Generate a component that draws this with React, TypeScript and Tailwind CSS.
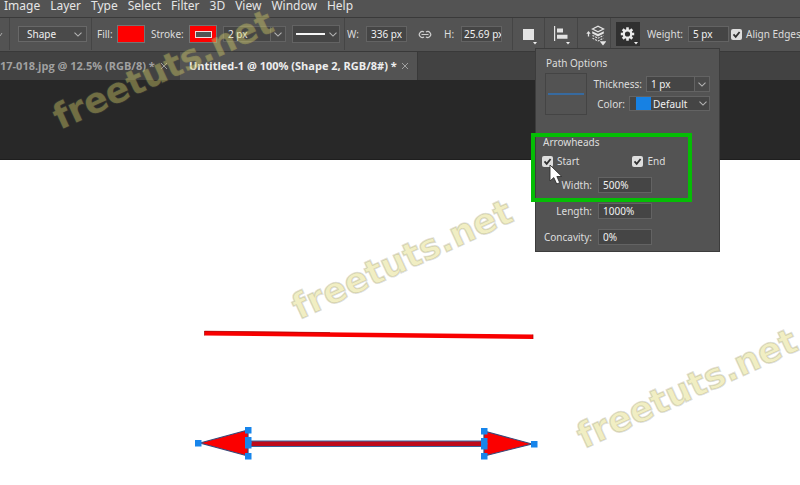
import type { ReactNode } from "react";

const menus = ["Image", "Layer", "Type", "Select", "Filter", "3D", "View", "Window", "Help"];

const fieldClass =
  "h-4 border border-[#636363] bg-[#454545] px-1 leading-3 text-[#f2f2f2] outline-none";

function Chevron() {
  return (
    <svg width="8" height="5" viewBox="0 0 8 5" fill="none" stroke="#b4b4b4" className="shrink-0" aria-hidden="true">
      <path d="M0.5 0.7 L4 4.1 L7.5 0.7" strokeWidth="1.1" />
    </svg>
  );
}

function Divider({ className }: { className: string }) {
  return <div className={`h-8 w-px shrink-0 bg-[#454545] ${className}`} />;
}

function Corner() {
  return <path d="M0 0 H4 L2 2.5 Z" fill="#f0f0f0" />;
}

function CheckBox({ id, label }: { id: string; label: string }) {
  return (
    <div className="flex items-center gap-1">
      <span className="grid h-[11px] w-[11px] shrink-0">
        <input
          id={id}
          type="checkbox"
          defaultChecked
          className="col-start-1 row-start-1 h-[11px] w-[11px] appearance-none rounded-[2px] bg-[#dedede]"
        />
        <svg viewBox="0 0 11 11" className="pointer-events-none col-start-1 row-start-1" aria-hidden="true">
          <path d="M2.5 5.4 L4.7 7.8 L8.6 3" fill="none" stroke="#303030" strokeWidth="1.8" />
        </svg>
      </span>
      <label htmlFor={id} className="whitespace-nowrap">{label}</label>
    </div>
  );
}

function Tool({ label, className, children }: { label: string; className: string; children: ReactNode }) {
  return (
    <button type="button" aria-label={label} className={`flex h-6 shrink-0 items-center justify-center ${className}`}>
      {children}
    </button>
  );
}

function GearIcon() {
  const teeth = [0, 45, 90, 135, 180, 225, 270, 315];
  return (
    <svg width="24" height="24" viewBox="0 0 24 24" aria-hidden="true">
      <g transform="translate(11.5 12)">
        <circle r="3.7" fill="none" stroke="#ececec" strokeWidth="2.2" />
        {teeth.map((angle) => (
          <rect key={angle} x="-1.3" y="-6.7" width="2.6" height="2.8" fill="#ececec" transform={`rotate(${angle})`} />
        ))}
      </g>
      <g transform="translate(18 20)"><Corner /></g>
    </svg>
  );
}

function OptionsBar() {
  return (
    <div className="flex h-[34px] items-center overflow-hidden border-t border-[#3a3a3a] bg-[#535353] pb-px text-[10px] leading-3 text-[#dddddd]">
      <div className="w-[9px] shrink-0 overflow-hidden"><svg width="3" height="5" aria-hidden="true"><path d="M0 4 L2 1" stroke="#aaa" /></svg></div>
      <Divider className="mr-2" />
      <div className="flex h-4 w-[69px] shrink-0 items-center border border-[#686868] bg-[#4a4a4a] pr-1">
        <select aria-label="Tool mode" className="min-w-0 flex-1 appearance-none bg-transparent pl-2 text-[#f0f0f0] outline-none">
          <option>Shape</option>
        </select>
        <Chevron />
      </div>
      <Divider className="ml-1 mr-[5px]" />
      <label htmlFor="fill" className="w-5 shrink-0">Fill:</label>
      <button id="fill" type="button" aria-label="Fill color" className="h-[18px] w-7 shrink-0 border border-[#747474] bg-[#fe0000]" />
      <label htmlFor="stroke" className="ml-1.5 w-[38px] shrink-0">Stroke:</label>
      <button id="stroke" type="button" aria-label="Stroke color" className="flex h-[18px] w-7 shrink-0 items-center justify-center border border-[#747474] bg-[#fe0000]">
        <span className="h-[7px] w-[17px] border border-[#f4dede] bg-[#535353]" />
      </button>
      <input aria-label="Stroke width" defaultValue="2 px" className={`${fieldClass} ml-1.5 w-12 shrink-0`} />
      <button type="button" aria-label="Stroke width presets" className="flex h-4 w-[15px] shrink-0 items-center justify-center border border-l-0 border-[#636363] bg-[#4a4a4a]"><Chevron /></button>
      <button type="button" aria-label="Stroke type" className="ml-1.5 flex h-[18px] w-12 shrink-0 items-center justify-center gap-1 border border-[#636363] bg-[#454545]">
        <span className="h-0.5 w-[29px] bg-[#f5f5f5]" />
        <Chevron />
      </button>
      <Divider className="ml-1 mr-0.5" />
      <label htmlFor="shape-w" className="w-[19px] shrink-0">W:</label>
      <input id="shape-w" defaultValue="336 px" className={`${fieldClass} w-[41px] shrink-0`} />
      <Tool label="Link width and height" className="ml-2.5 w-4">
        <svg width="16" height="9" viewBox="0 0 16 9" fill="none" stroke="#cfcfcf" strokeWidth="1.2" aria-hidden="true">
          <path d="M7 2 A3 3 0 1 0 7 7 M9 2 A3 3 0 1 1 9 7 M4.5 4.5 H11.5" />
        </svg>
      </Tool>
      <label htmlFor="shape-h" className="ml-[11px] w-[17px] shrink-0">H:</label>
      <input id="shape-h" defaultValue="25.69 px" className="h-4 w-[41px] shrink-0 border border-[#636363] bg-[#454545] pl-0.5 leading-3 text-[#f2f2f2] outline-none" />
      <Divider className="ml-2.5 mr-1.5" />
      <Tool label="Path operations" className="w-[18px]">
        <svg width="18" height="24" viewBox="0 0 18 24" aria-hidden="true">
          <rect x="4" y="7" width="11" height="11" fill="#e3e3e3" />
          <g transform="translate(14 20)"><Corner /></g>
        </svg>
      </Tool>
      <Divider className="mx-[7px]" />
      <Tool label="Path alignment" className="w-5">
        <svg width="20" height="24" viewBox="0 0 20 24" fill="#e3e3e3" aria-hidden="true">
          <path d="M2 4 H3.2 V19 H2 Z M5 6.5 H11 V10.5 H5 Z M5 12.8 H15.5 V16.8 H5 Z" />
          <g transform="translate(14 20)"><Corner /></g>
        </svg>
      </Tool>
      <Divider className="ml-[5px] mr-1.5" />
      <Tool label="Path arrangement" className="w-[22px]">
        <svg width="22" height="24" viewBox="0 0 22 24" fill="none" stroke="#e3e3e3" strokeWidth="1.3" aria-hidden="true">
          <path d="M4.5 14.5 V10.5" />
          <path d="M2.3 11.8 L4.5 9 L6.7 11.8 Z" fill="#e3e3e3" stroke="none" />
          <path d="M8.5 7 L14 4.2 L19.5 7 L14 9.8 Z" />
          <path d="M8.2 9.2 L14 12 L19.8 9.2 V11.4 L14 14.4 L8.2 11.4 Z" fill="#e3e3e3" stroke="none" />
          <path d="M8.5 13.4 L14 16.2 L19.5 13.4 M8.5 16.2 L14 19 L19.5 16.2" strokeDasharray="2 1" strokeWidth="1.1" />
          <g transform="translate(17 20)"><Corner /></g>
        </svg>
      </Tool>
      <Divider className="ml-1 mr-[5px]" />
      <Tool label="Path options" className="w-6 bg-[#303030]"><GearIcon /></Tool>
      <label htmlFor="weight" className="ml-[7px] w-[41px] shrink-0">Weight:</label>
      <input id="weight" defaultValue="5 px" className={`${fieldClass} mr-0.5 w-[41px] shrink-0`} />
      <CheckBox id="align-edges" label="Align Edges" />
    </div>
  );
}

function Percent({ id, label, value }: { id: string; label: string; value: string }) {
  return (
    <div className="flex items-center">
      <label htmlFor={id} className="w-14 text-right">{label}</label>
      <input id={id} defaultValue={value} className={`${fieldClass} ml-1.5 w-[54px]`} />
    </div>
  );
}

function PathOptions() {
  return (
    <section className="absolute left-[535px] top-12 w-[185px] border border-[#3c3c3c] bg-[#535353] pb-1.5 text-[10px] leading-3 text-[#dddddd]">
      <h2 className="ml-2.5 mt-2">Path Options</h2>
      <div className="ml-[9px] mt-1 flex">
        <div className="flex h-[42px] w-[42px] items-center border border-[#444444] px-0.5">
          <div className="h-0.5 w-full bg-[#376a9f]" />
        </div>
        <div className="ml-[3px] mt-[3px] flex flex-col gap-1">
          <div className="flex items-center">
            <label htmlFor="thickness" className="w-[52px] text-right">Thickness:</label>
            <input id="thickness" defaultValue="1 px" className={`${fieldClass} ml-1 w-[49px]`} />
            <button type="button" aria-label="Thickness presets" className="flex h-4 w-[15px] items-center justify-center border border-l-0 border-[#636363] bg-[#4a4a4a]"><Chevron /></button>
          </div>
          <div className="flex items-center">
            <label htmlFor="path-color" className="w-[35px] text-right">Color:</label>
            <div className="ml-1 flex h-[15px] w-[81px] items-center border border-[#636363] bg-[#454545] pr-0.5">
              <span className="ml-1.5 h-[13px] w-[15px] bg-[#1781e3]" />
              <select id="path-color" className="min-w-0 flex-1 appearance-none bg-transparent pl-0.5 text-[#f2f2f2] outline-none">
                <option>Default</option>
              </select>
              <Chevron />
            </div>
          </div>
        </div>
      </div>
      <h3 className="ml-[7px] mt-[21px]">Arrowheads</h3>
      <div className="ml-1.5 mt-[7px] flex gap-[53px]">
        <CheckBox id="arrow-start" label="Start" />
        <CheckBox id="arrow-end" label="End" />
      </div>
      <div className="mt-2.5 flex flex-col gap-2.5">
        <Percent id="arrow-width" label="Width:" value="500%" />
        <Percent id="arrow-length" label="Length:" value="1000%" />
        <Percent id="arrow-concavity" label="Concavity:" value="0%" />
      </div>
    </section>
  );
}

function Artwork() {
  const handles = [[198, 283], [248, 270], [248, 280], [248, 285], [248, 296], [484, 271], [484, 281], [484, 286], [484, 296], [534, 284]];
  return (
    <svg className="h-[325px] w-full" role="img" aria-label="A red line and a double-headed red arrow">
      <path d="M204.5 171 L533 174.5 V179 L204.5 175.5 Z" fill="#f80000" />
      <path d="M204.5 171.2 L330 172.6 M204.5 175.5 V171 M533 174.5 V179" fill="none" stroke="#a50505" strokeWidth="0.7" />
      <path d="M248 281 H484 V286.5 H248 Z" fill="#be0a1b" stroke="#38659d" strokeWidth="1.2" />
      <path d="M200 283 L248 270 V296 Z M532 284 L484 271 V296 Z" fill="#fb0000" stroke="#38497a" strokeWidth="1.2" />
      {handles.map(([x, y]) => (
        <rect key={`${x}-${y}`} x={x - 3} y={y - 3} width="6.5" height="6.5" fill="#1785eb" />
      ))}
    </svg>
  );
}

function Watermarks() {
  const places = [[60, 130], [299, 320], [584, 449]];
  return (
    <svg className="pointer-events-none absolute inset-0 h-full w-full" aria-hidden="true">
      {places.map(([x, y]) => (
        <g key={x} transform={`translate(${x} ${y}) rotate(-24.7)`} className="font-['DejaVu_Sans',sans-serif] text-[35px] font-bold">
          <text fill="#ddd66c" fillOpacity="0.42" stroke="#66664e" strokeOpacity="0.2" strokeWidth="1.6">freetuts.net</text>
        </g>
      ))}
    </svg>
  );
}

export default function App() {
  return (
    <main className="relative min-h-screen overflow-hidden bg-white font-['Noto_Sans',sans-serif]">
      <nav className="flex h-[17px] items-start gap-2.5 bg-[#535353] pl-1 text-xs leading-[11px] text-[#e6e6e6]">
        {menus.map((name) => (
          <button key={name} type="button">{name}</button>
        ))}
      </nav>
      <OptionsBar />
      <div role="tablist" className="flex h-[29px] items-stretch border-t border-[#393939] bg-[#424242] font-['Open_Sans',sans-serif] text-[11px] font-bold">
        <div className="flex w-[180px] items-center justify-between pr-3 text-[#a0a0a0]">
          <button role="tab" type="button" aria-selected="false" className="whitespace-nowrap">17-018.jpg @ 12.5% (RGB/8) *</button>
          <button type="button" aria-label="Close 17-018.jpg" className="grid place-items-center"><Close /></button>
        </div>
        <div className="flex items-center gap-1 border-r border-[#393939] bg-[#535353] pl-[9px] pr-2 text-[#eeeeee]">
          <button role="tab" type="button" aria-selected="true" className="whitespace-nowrap">Untitled-1 @ 100% (Shape 2, RGB/8#) *</button>
          <button type="button" aria-label="Close Untitled-1"><Close /></button>
        </div>
      </div>
      <div className="h-20 border-b border-[#1e1e1e] bg-[#282828]" />
      <Artwork />
      <Watermarks />
      <PathOptions />
      <div className="pointer-events-none absolute left-[531px] top-[133px] h-[69px] w-[161px] border-4 border-[#05bd05]" />
      <svg className="pointer-events-none absolute left-[549px] top-[164px]" width="14" height="22" viewBox="0 0 14 22" aria-hidden="true">
        <path d="M1 1 V17 L4.8 13.6 L7.7 20 L10.7 18.7 L7.9 12.5 H12.8 Z" fill="#ffffff" stroke="#303030" strokeWidth="0.9" />
      </svg>
    </main>
  );
}

function Close() {
  return (
    <svg width="8" height="8" viewBox="0 0 8 8" stroke="#a9a9a9" strokeWidth="0.9" aria-hidden="true">
      <path d="M1 1 L7 7 M7 1 L1 7" />
    </svg>
  );
}
